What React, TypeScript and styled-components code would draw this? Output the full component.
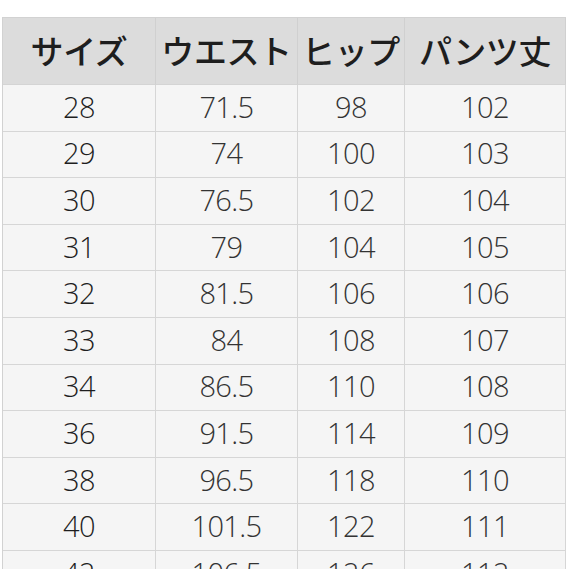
import React from "react";
import styled, { createGlobalStyle } from "styled-components";

const GlobalStyle = createGlobalStyle`
    html, body {
        margin: 0;
        padding: 0;
        background: #ffffff;
        overflow: hidden;
    }
`;

const Page = styled.div`
    padding: 17px 0 0 2px;
    width: 569px;
    height: 569px;
    box-sizing: border-box;
    overflow: hidden;
`;

const SizeGrid = styled.div`
    display: grid;
    grid-template-columns: 153px 142px 107px 161px;
    grid-template-rows: 67px;
    grid-auto-rows: 46.6px;
    width: max-content;
    border-top: 1px solid #d2d2d2;
    border-left: 1px solid #d2d2d2;
`;

const HeadCell = styled.div`
    display: flex;
    align-items: center;
    justify-content: center;
    background: #dcdcdc;
    border-right: 1px solid #d0d0d0;
    border-bottom: 1px solid #d4d4d4;
    font-family: "Noto Sans CJK JP", sans-serif;
    font-size: 33px;
    font-weight: 500;
    letter-spacing: -0.4px;
    color: #1e1e1e;
    box-sizing: border-box;
    padding-bottom: 2px;
`;

const Cell = styled.div<{ $first?: boolean }>`
    display: flex;
    align-items: center;
    justify-content: center;
    background: #f5f5f5;
    border-right: 1px solid #d6d6d6;
    border-bottom: 1px solid #d6d6d6;
    font-family: "Open Sans", "Noto Sans", sans-serif;
    font-size: 29px;
    font-weight: 360;
    letter-spacing: -0.6px;
    color: ${(p) => (p.$first ? "#1e1e1e" : "#333333")};
    box-sizing: border-box;
    padding-bottom: 3px;
`;

const headers = ["サイズ", "ウエスト", "ヒップ", "パンツ丈"];

const rows = [
    ["28", "71.5", "98", "102"],
    ["29", "74", "100", "103"],
    ["30", "76.5", "102", "104"],
    ["31", "79", "104", "105"],
    ["32", "81.5", "106", "106"],
    ["33", "84", "108", "107"],
    ["34", "86.5", "110", "108"],
    ["36", "91.5", "114", "109"],
    ["38", "96.5", "118", "110"],
    ["40", "101.5", "122", "111"],
    ["42", "106.5", "126", "112"],
];

const App = () => {
    return (
        <Page>
            <GlobalStyle />
            <SizeGrid>
                {headers.map((h) => (
                    <HeadCell key={h}>{h}</HeadCell>
                ))}
                {rows.map((row) =>
                    row.map((v, i) => (
                        <Cell key={row[0] + "-" + i} $first={i === 0}>
                            {v}
                        </Cell>
                    ))
                )}
            </SizeGrid>
        </Page>
    );
};

export default App;
